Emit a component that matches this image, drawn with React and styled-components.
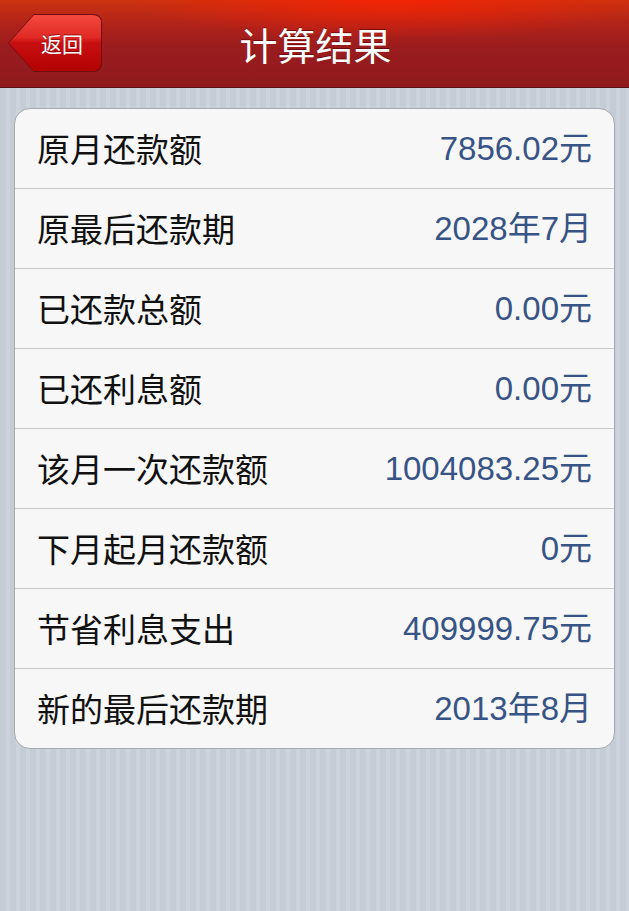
import React from 'react';
import styled, { createGlobalStyle } from 'styled-components';

const GlobalStyle = createGlobalStyle`
    html, body {
        margin: 0;
        padding: 0;
    }
    body {
        min-height: 911px;
        background-color: #c9d0da;
        background-image: repeating-linear-gradient(
            90deg,
            #c5ccd6 0px,
            #c5ccd6 6px,
            #ccd3dd 6px,
            #ccd3dd 10px
        );
        font-family: "Noto Sans CJK SC", "Liberation Sans", sans-serif;
    }
`;

const Page = styled.div`
    display: flex;
    flex-direction: column;
    min-height: 911px;
`;

const NavBar = styled.header`
    position: relative;
    height: 87px;
    border-bottom: 1px solid #5e1014;
    background:
        radial-gradient(ellipse 260px 40px at 62% 0%, rgba(255, 30, 0, 0.75), rgba(255, 30, 0, 0) 100%),
        linear-gradient(180deg, #cc3310 0%, #b0231a 28%, #9a1c1e 55%, #8f1a1e 100%);
    display: flex;
    align-items: center;
    justify-content: center;
`;

const Title = styled.h1`
    margin: 0;
    font-family: "Noto Sans CJK SC", sans-serif;
    font-weight: 400;
    font-size: 38px;
    line-height: 1;
    color: #ffffff;
    text-shadow: 0 -1px 0 rgba(80, 0, 0, 0.6);
    padding-left: 2px;
`;

const BackButton = styled.button`
    position: absolute;
    left: 8px;
    top: 14px;
    width: 94px;
    height: 58px;
    padding: 0;
    border: none;
    background: #6e1013;
    clip-path: path('M26 0 H85 Q94 0 94 9 V49 Q94 58 85 58 H26 L0 29 Z');
    display: flex;
    cursor: pointer;
`;

const BackFace = styled.span`
    flex: 1;
    margin: 1px;
    background: linear-gradient(180deg, #f5493f 0%, #e02a25 40%, #c70f10 50%, #b30203 100%);
    clip-path: path('M25 0 H83 Q92 0 92 8 V48 Q92 56 83 56 H25 L0 28 Z');
    display: flex;
    align-items: center;
    justify-content: center;
    padding-left: 14px;
    color: #ffffff;
    font-family: "Noto Sans CJK SC", sans-serif;
    font-size: 21px;
    text-shadow: 0 -1px 0 rgba(90, 0, 0, 0.6);
`;

const Card = styled.section`
    margin: 20px 14px 0;
    background: #f7f7f7;
    border: 1px solid #a6a9ae;
    border-radius: 16px;
    overflow: hidden;
`;

const Row = styled.div`
    height: 79px;
    display: flex;
    align-items: center;
    justify-content: space-between;
    padding: 0 22px 0 22px;
    border-top: ${p => (p.$first ? 'none' : '1px solid #c8c8cb')};
`;

const Label = styled.span`
    font-family: "Noto Sans CJK SC", sans-serif;
    font-size: 33px;
    color: #111111;
    line-height: 1;
`;

const Value = styled.span`
    font-family: "Liberation Sans", "Noto Sans CJK SC", sans-serif;
    font-size: 33px;
    color: #385487;
    line-height: 1;
`;

const rows = [
    ['原月还款额', '7856.02元'],
    ['原最后还款期', '2028年7月'],
    ['已还款总额', '0.00元'],
    ['已还利息额', '0.00元'],
    ['该月一次还款额', '1004083.25元'],
    ['下月起月还款额', '0元'],
    ['节省利息支出', '409999.75元'],
    ['新的最后还款期', '2013年8月'],
];

export default function App() {
    return (
        <Page>
            <GlobalStyle />
            <NavBar>
                <BackButton>
                    <BackFace>返回</BackFace>
                </BackButton>
                <Title>计算结果</Title>
            </NavBar>
            <Card>
                {rows.map(([label, value], i) => (
                    <Row key={label} $first={i === 0}>
                        <Label>{label}</Label>
                        <Value>{value}</Value>
                    </Row>
                ))}
            </Card>
        </Page>
    );
}
